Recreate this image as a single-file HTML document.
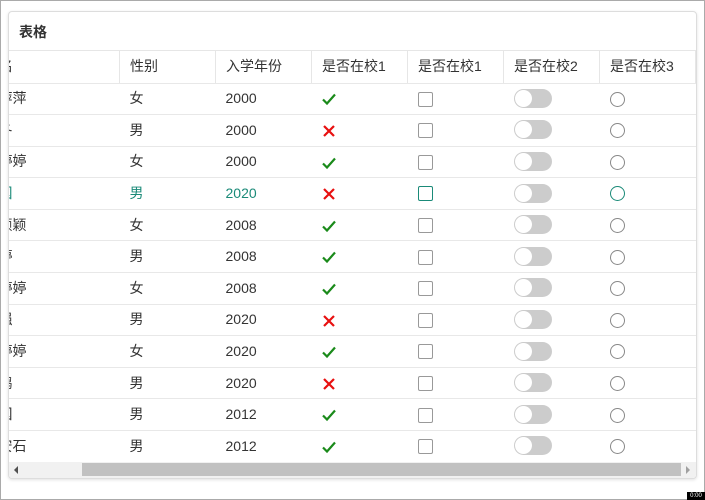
<!DOCTYPE html>
<html><head><meta charset="utf-8"><style>
body{margin:0;width:705px;height:500px;background:#fff;font-family:"Liberation Sans","Noto Sans CJK SC",sans-serif;position:relative;overflow:hidden}
.frame{position:absolute;left:0;top:0;width:703px;height:498px;border:1px solid #aaa}
.card{position:absolute;left:8px;top:11px;width:687px;height:466px;border:1px solid #ddd;border-radius:4px;box-shadow:0 1px 3px rgba(0,0,0,.12);overflow:hidden;background:#fff}
.title{position:absolute;left:10px;top:10px;font-size:14px;font-weight:bold;color:#333}
.tw{position:absolute;left:0;top:38px;width:687px;height:412px;overflow:hidden;border-top:1px solid #e6e6e6}
table{position:absolute;left:-35px;top:0;border-collapse:collapse;table-layout:fixed;width:817px;font-size:14px;color:#333}
td{height:31.6px;padding:0 0 1px 10px;border-bottom:1px solid #e8e8e8;white-space:nowrap;vertical-align:middle;box-sizing:border-box;overflow:hidden}
tr:first-child td{border-left:1px solid #e6e6e6;height:32px}
tr.hl td{color:#1a8a78}
.cb{display:inline-block;width:15px;height:15px;border:1px solid #999;border-radius:2px;vertical-align:middle;box-sizing:border-box}
.tg{display:inline-block;width:38px;height:19px;background:#ccc;border-radius:10px;position:relative;vertical-align:middle}
.tg:after{content:"";position:absolute;left:1px;top:1px;width:17px;height:17px;border-radius:50%;background:#fff}
.rd{display:inline-block;width:15px;height:15px;border:1px solid #888;border-radius:50%;vertical-align:middle;box-sizing:border-box}
tr.hl .cb,tr.hl .rd{border-color:#1a8a78}
svg{vertical-align:middle}
.sb{position:absolute;left:0;top:450px;width:687px;height:16px;background:#f1f1f1}
.th{position:absolute;left:73px;top:1px;width:599px;height:13px;background:#c1c1c1}
.al{position:absolute;left:5px;top:4px;width:0;height:0;border-top:4px solid transparent;border-bottom:4px solid transparent;border-right:4px solid #505050}
.ar{position:absolute;left:677px;top:4px;width:0;height:0;border-top:4px solid transparent;border-bottom:4px solid transparent;border-left:4px solid #a0a0a0}
.tm{position:absolute;right:0;bottom:0;width:18px;height:8px;background:#000;color:#fff;font-size:6px;line-height:8px;text-align:center}
</style></head><body>
<svg width="0" height="0" style="position:absolute"><defs>
<symbol id="ok" viewBox="0 0 14 14"><path d="M1 7.5 L5 11.5 L13 2.5" fill="none" stroke="#1a8a1a" stroke-width="2.2"/></symbol>
<symbol id="no" viewBox="0 0 14 14"><path d="M2 2 L12 12 M12 2 L2 12" fill="none" stroke="#e81010" stroke-width="2.2"/></symbol>
</defs></svg>
<div class="frame"></div>
<div class="card">
<div class="title">表格</div>
<div class="tw"><table>
<colgroup><col style="width:145px"><col style="width:96px"><col style="width:96px"><col style="width:96px"><col style="width:96px"><col style="width:96px"><col style="width:96px"><col style="width:96px"></colgroup>
<tr><td>姓名</td><td>性别</td><td>入学年份</td><td>是否在校1</td><td>是否在校1</td><td>是否在校2</td><td>是否在校3</td><td></td></tr>
<tr><td>李萍萍</td><td>女</td><td>2000</td><td><svg width="14" height="14"><use href="#ok"/></svg></td><td><span class="cb"></span></td><td><span class="tg"></span></td><td><span class="rd"></span></td><td></td></tr>
<tr><td>刘冬</td><td>男</td><td>2000</td><td><svg width="14" height="14"><use href="#no"/></svg></td><td><span class="cb"></span></td><td><span class="tg"></span></td><td><span class="rd"></span></td><td></td></tr>
<tr><td>李婷婷</td><td>女</td><td>2000</td><td><svg width="14" height="14"><use href="#ok"/></svg></td><td><span class="cb"></span></td><td><span class="tg"></span></td><td><span class="rd"></span></td><td></td></tr>
<tr class="hl"><td>张国</td><td>男</td><td>2020</td><td><svg width="14" height="14"><use href="#no"/></svg></td><td><span class="cb"></span></td><td><span class="tg"></span></td><td><span class="rd"></span></td><td></td></tr>
<tr><td>李颖颖</td><td>女</td><td>2008</td><td><svg width="14" height="14"><use href="#ok"/></svg></td><td><span class="cb"></span></td><td><span class="tg"></span></td><td><span class="rd"></span></td><td></td></tr>
<tr><td>王婷</td><td>男</td><td>2008</td><td><svg width="14" height="14"><use href="#ok"/></svg></td><td><span class="cb"></span></td><td><span class="tg"></span></td><td><span class="rd"></span></td><td></td></tr>
<tr><td>张婷婷</td><td>女</td><td>2008</td><td><svg width="14" height="14"><use href="#ok"/></svg></td><td><span class="cb"></span></td><td><span class="tg"></span></td><td><span class="rd"></span></td><td></td></tr>
<tr><td>李强</td><td>男</td><td>2020</td><td><svg width="14" height="14"><use href="#no"/></svg></td><td><span class="cb"></span></td><td><span class="tg"></span></td><td><span class="rd"></span></td><td></td></tr>
<tr><td>王婷婷</td><td>女</td><td>2020</td><td><svg width="14" height="14"><use href="#ok"/></svg></td><td><span class="cb"></span></td><td><span class="tg"></span></td><td><span class="rd"></span></td><td></td></tr>
<tr><td>李鹏</td><td>男</td><td>2020</td><td><svg width="14" height="14"><use href="#no"/></svg></td><td><span class="cb"></span></td><td><span class="tg"></span></td><td><span class="rd"></span></td><td></td></tr>
<tr><td>王国</td><td>男</td><td>2012</td><td><svg width="14" height="14"><use href="#ok"/></svg></td><td><span class="cb"></span></td><td><span class="tg"></span></td><td><span class="rd"></span></td><td></td></tr>
<tr><td>王安石</td><td>男</td><td>2012</td><td><svg width="14" height="14"><use href="#ok"/></svg></td><td><span class="cb"></span></td><td><span class="tg"></span></td><td><span class="rd"></span></td><td></td></tr>
</table></div>
<div class="sb"><div class="al"></div><div class="th"></div><div class="ar"></div></div>
</div>
<div class="tm">0:00</div>
</body></html>
